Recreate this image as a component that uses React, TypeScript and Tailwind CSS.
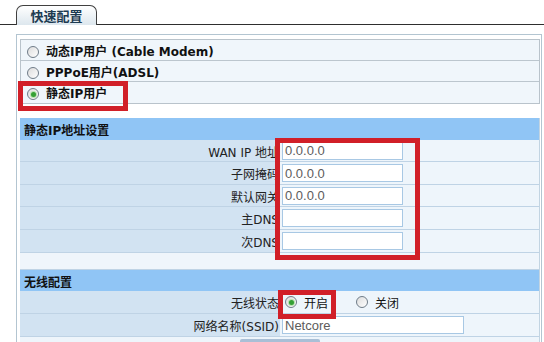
import type { ReactNode } from "react";

function Radio({ checked }: { checked?: boolean }) {
  return (
    <span className="w-[12px] h-[12px] rounded-full border border-[#6f7c88] bg-gradient-to-br from-[#dcdcdc] to-white flex items-center justify-center shrink-0">
      {checked && <span className="w-[5px] h-[5px] rounded-full bg-[#35a035] ring-1 ring-[#b8e0b0]" />}
    </span>
  );
}

function OptionRow({ label, checked }: { label: string; checked?: boolean }) {
  return (
    <div className="h-[21px] flex items-center gap-[7px] pl-[6px] pt-[3px] font-bold text-[12px] text-[#111]">
      <Radio checked={checked} />
      <span>{label}</span>
    </div>
  );
}

function Header({ title, h }: { title: string; h: string }) {
  return (
    <div className={`${h} bg-[#90c5f5] flex items-center pl-[4px] pt-[4px] font-bold text-[12px] text-[#111]`}>{title}</div>
  );
}

function FieldRow({ label, h, children }: { label: string; h: string; children?: ReactNode }) {
  return (
    <div className={`${h} flex border-b border-[#bfd3e5]`}>
      <div className="w-[260px] bg-[#d2e3f2] flex items-center justify-end pr-[1px] pt-[4px] text-[12px] text-[#222]">{label}</div>
      <div className="flex-1 bg-[#eef5fb] flex items-center pl-[2px]">{children}</div>
    </div>
  );
}

function TextBox({ value, w = "w-[121px]" }: { value?: string; w?: string }) {
  return (
    <div className={`${w} h-[18px] border border-[#a8c8e4] bg-white flex items-center pl-[2px] pt-[1px] font-['Liberation_Sans','Noto_Sans_CJK_SC',sans-serif] text-[13px] text-[#5c5c5c]`}>
      {value}
    </div>
  );
}

export default function App() {
  return (
    <div className="w-[544px] h-[342px] overflow-hidden bg-white relative font-['DejaVu_Sans','Noto_Sans_CJK_SC',sans-serif]">
      <div className="h-[25px] border-b border-[#2e2e2e] flex items-end pl-[16px]">
        <div className="w-[81px] h-[20px] -mb-px rounded-t-[7px] border border-b-0 border-[#404040] bg-gradient-to-b from-white to-[#dde7ee] flex items-center justify-center pt-[2px] font-bold text-[13px] text-[#1d3b52]">
          快速配置
        </div>
      </div>

      <div className="mt-[9px] ml-[16px] w-[526px] h-[400px] border-l border-t border-r border-[#b3c5d1] pl-[3px] pr-[1px] pt-[4px]">
        <div className="border border-[#b9c3cb] bg-[#f0f6fb] divide-y divide-[#bcc6ce]">
          <OptionRow label="动态IP用户 (Cable Modem)" />
          <OptionRow label="PPPoE用户(ADSL)" />
          <OptionRow label="静态IP用户" checked />
        </div>

        <div className="mt-[14px] border-r border-[#c2d4e2]">
          <Header title="静态IP地址设置" h="h-[22px]" />
          <FieldRow label="WAN IP 地址" h="h-[22px]"><TextBox value="0.0.0.0" /></FieldRow>
          <FieldRow label="子网掩码" h="h-[23px]"><TextBox value="0.0.0.0" /></FieldRow>
          <FieldRow label="默认网关" h="h-[22px]"><TextBox value="0.0.0.0" /></FieldRow>
          <FieldRow label="主DNS" h="h-[23px]"><TextBox /></FieldRow>
          <FieldRow label="次DNS" h="h-[23px]"><TextBox /></FieldRow>
          <div className="h-[17px] bg-[#eff5fb] border-b border-[#bfd3e5]" />
          <Header title="无线配置" h="h-[21px]" />
          <FieldRow label="无线状态" h="h-[23px]">
            <div className="flex items-center pl-[3px] text-[12px] text-[#111]">
              <Radio checked />
              <span className="ml-[7px] pt-[4px]">开启</span>
              <span className="ml-[28px]"><Radio /></span>
              <span className="ml-[7px] pt-[4px]">关闭</span>
            </div>
          </FieldRow>
          <FieldRow label="网络名称(SSID)" h="h-[23px]"><TextBox value="Netcore" w="w-[182px]" /></FieldRow>
          <div className="h-[20px] flex bg-[#eef5fb]">
            <div className="ml-[220px] mt-[2px] w-[80px] h-[18px] bg-[#a9bfd6] rounded-t-[2px]" />
          </div>
        </div>
      </div>

      <div className="absolute left-[18px] top-[81px] w-[110px] h-[30px] border-[5px] border-[#d11f28]" />
      <div className="absolute left-[275px] top-[138px] w-[145px] h-[122px] border-[5px] border-[#d11f28]" />
      <div className="absolute left-[278px] top-[290px] w-[58px] h-[29px] border-[5px] border-[#d11f28]" />
    </div>
  );
}
